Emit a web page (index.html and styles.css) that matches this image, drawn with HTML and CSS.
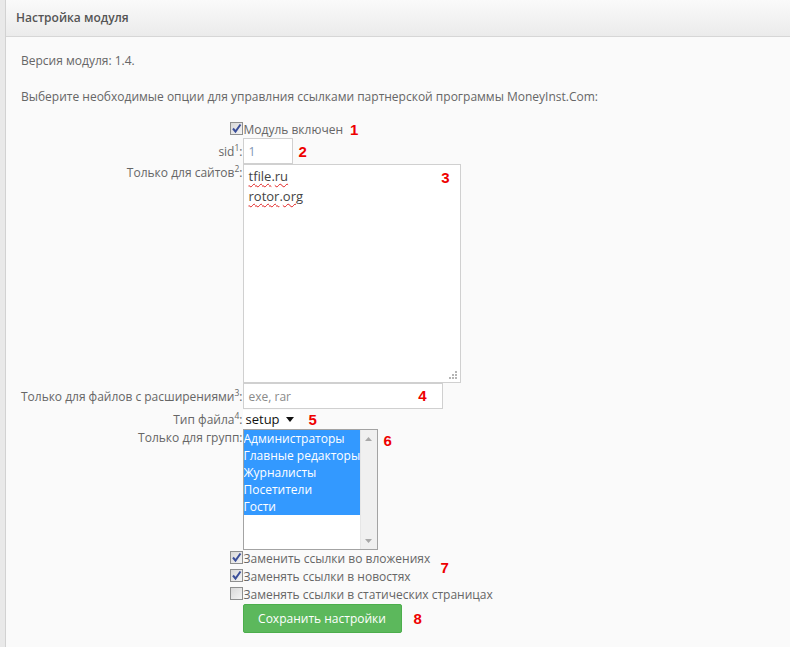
FILE: index.html
```html
<!DOCTYPE html>
<html lang="ru">
<head>
<meta charset="utf-8">
<title>Настройка модуля</title>
<link rel="stylesheet" href="styles.css">
</head>
<body>
<div class="panel">
  <div class="panel-head">Настройка модуля</div>
  <div class="panel-body">
    <p class="line">Версия модуля: 1.4.</p>
    <p class="line intro">Выберите необходимые опции для управлния ссылками партнерской программы MoneyInst.Com:</p>

    <div class="form">
      <div class="lab chk-cell"><span class="cb on"><svg viewBox="0 0 13 13" width="13" height="13"><path d="M3 6.5 L5.5 9.5 L10.5 2.5" fill="none" stroke="#3b4f9a" stroke-width="2"/></svg></span></div>
      <div class="ctl row-chk first">Модуль включен<span class="num n1">1</span></div>

      <div class="lab mid">sid<sup>1</sup>:</div>
      <div class="ctl"><span class="input small"><span class="val blue">1</span></span><span class="num n2">2</span></div>

      <div class="lab">Только для сайтов<sup>2</sup>:</div>
      <div class="ctl">
        <div class="textarea">
          <div class="ta-line"><span class="spell">tfile</span>.<span class="spell">ru</span></div>
          <div class="ta-line"><span class="spell">rotor</span>.<span class="spell">org</span></div>
          <span class="num n3">3</span>
          <svg class="grip" viewBox="0 0 10 10" width="10" height="10"><g fill="#b5b5b5"><rect x="7" y="1" width="2" height="2"/><rect x="4" y="4" width="2" height="2"/><rect x="7" y="4" width="2" height="2"/><rect x="1" y="7" width="2" height="2"/><rect x="4" y="7" width="2" height="2"/><rect x="7" y="7" width="2" height="2"/></g></svg>
        </div>
      </div>

      <div class="lab mid tight">Только для файлов с расширениями<sup>3</sup>:</div>
      <div class="ctl"><span class="input wide"><span class="val gray">exe, rar</span><span class="num n4">4</span></span></div>

      <div class="lab mid">Тип файла<sup>4</sup>:</div>
      <div class="ctl"><span class="select">setup<svg class="caret" viewBox="0 0 8 5" width="8" height="5"><path d="M0 0 H8 L4 5 Z" fill="#111"/></svg></span><span class="num n5">5</span></div>

      <div class="lab">Только для групп:</div>
      <div class="ctl top">
        <div class="listbox">
          <ul class="opts">
            <li>Администраторы</li>
            <li>Главные редакторы</li>
            <li>Журналисты</li>
            <li>Посетители</li>
            <li>Гости</li>
          </ul>
          <div class="sbar">
            <svg viewBox="0 0 7 4" width="7" height="4"><path d="M0 4 L3.5 0 L7 4 Z" fill="#a8a8a8"/></svg>
            <svg viewBox="0 0 7 4" width="7" height="4"><path d="M0 0 L3.5 4 L7 0 Z" fill="#a8a8a8"/></svg>
          </div>
        </div>
        <span class="num n6">6</span>
      </div>

      <div class="lab chk-cell"><span class="cb on"><svg viewBox="0 0 13 13" width="13" height="13"><path d="M3 6.5 L5.5 9.5 L10.5 2.5" fill="none" stroke="#3b4f9a" stroke-width="2"/></svg></span></div>
      <div class="ctl row-chk">Заменить ссылки во вложениях</div>

      <div class="lab chk-cell"><span class="cb on"><svg viewBox="0 0 13 13" width="13" height="13"><path d="M3 6.5 L5.5 9.5 L10.5 2.5" fill="none" stroke="#3b4f9a" stroke-width="2"/></svg></span></div>
      <div class="ctl row-chk">Заменять ссылки в новостях<span class="num n7">7</span></div>

      <div class="lab chk-cell"><span class="cb"></span></div>
      <div class="ctl row-chk">Заменять ссылки в статических страницах</div>

      <div class="lab"></div>
      <div class="ctl btn-row"><span class="btn">Сохранить настройки</span><span class="num n8">8</span></div>
    </div>
  </div>
</div>
</body>
</html>
```

FILE: styles.css
```css
* { box-sizing: border-box; }
html, body { margin: 0; padding: 0; }
body {
  background: #e9e9e9;
  font-family: "Open Sans", "Liberation Sans", sans-serif;
  font-size: 12px;
  color: #666;
  height: 647px;
  overflow: hidden;
}
.panel {
  margin-left: 5px;
  border-left: 1px solid #d2d2d2;
  background: #fafafa;
  min-height: 647px;
}
.panel-head {
  height: 37px;
  padding: 9px 10px 0;
  font-weight: 600;
  font-size: 12px;
  color: #555;
  background: linear-gradient(#fafafa, #ebebeb);
  border-bottom: 1px solid #d6d6d6;
}
.panel-body {
  padding: 15px 15px 0;
}
.line {
  margin: 0;
  line-height: 17px;
}
.intro { margin-top: 19px; }

.form {
  margin-top: 16px;
  display: grid;
  grid-template-columns: max-content 1fr;
  line-height: 17px;
}
.lab {
  text-align: right;
  white-space: nowrap;
}
.lab.mid { align-self: center; }
.lab.tight { letter-spacing: -0.02px; }
.lab sup {
  font-size: 8.5px;
  line-height: 0;
  vertical-align: 5px;
  letter-spacing: 0;
}
.ctl { display: flex; align-items: center; }
.ctl.top { align-items: flex-start; }

.chk-cell { display: flex; justify-content: flex-end; align-items: flex-start; }
.row-chk { position: relative; height: 18px; align-items: center; padding-left: 1px; padding-bottom: 1px; }
.row-chk.first { height: 17px; padding-bottom: 0; }

.cb {
  width: 13px;
  height: 13px;
  border: 1px solid #8e8f8f;
  background: linear-gradient(135deg, #d8d8d8, #f4f4f4);
  display: block;
  position: relative;
  margin-top: 1px;
}
.cb svg { position: absolute; left: -1px; top: -1px; }

.num {
  color: #ee0000;
  font-family: "Liberation Sans", Arial, sans-serif;
  font-weight: bold;
  font-size: 15px;
}
.n1 { margin-left: 7px; }
.n2 { margin-left: 6px; }
.n5 { margin-left: 9px; }
.n6 { margin-left: 6px; margin-top: 3px; }
.n8 { margin-left: 12px; }
.n3 { position: absolute; right: 10px; top: 3px; }
.n4 { position: absolute; right: 15px; top: 3px; }
.n7 { position: absolute; left: 198px; top: -9px; }

.input {
  position: relative;
  display: flex;
  align-items: center;
  height: 26px;
  border: 1px solid #d0d0d0;
  background: #fff;
  padding: 0 5px;
  font-size: 12px;
}
.input.small { width: 50px; }
.input.wide { width: 200px; }
.val.blue { color: #7f95b5; }
.val.gray { color: #8a8a8a; }

.textarea {
  position: relative;
  width: 218px;
  height: 219px;
  border: 1px solid #d0d0d0;
  background: #fff;
  padding: 1px 5px;
  font-size: 13px;
  line-height: 20px;
  color: #444;
}
.spell {
  text-decoration: underline wavy #e02020;
  text-decoration-thickness: 1px;
  text-underline-offset: 2px;
}
.grip { position: absolute; right: 2px; bottom: 2px; }

.select {
  display: flex;
  align-items: center;
  width: 57px;
  height: 19px;
  margin-top: 1px;
  background: #fff;
  padding-left: 3px;
  color: #111;
  font-size: 13px;
}
.caret { margin-left: auto; margin-right: 6px; }

.listbox {
  display: flex;
  width: 135px;
  height: 121px;
  border: 1px solid #a3a3a3;
  background: #fff;
  overflow: hidden;
}
.opts {
  list-style: none;
  margin: 0;
  padding: 0;
  width: 116px;
  flex: none;
  overflow: hidden;
}
.opts li {
  height: 17px;
  line-height: 17px;
  background: #3399ff;
  color: #fff;
  white-space: nowrap;
  font-size: 12px;
}
.sbar {
  flex: 1;
  background: #f0f0f0;
  border-left: 1px solid #e6e6e6;
  display: flex;
  flex-direction: column;
  align-items: center;
  justify-content: space-between;
  padding: 7px 0 6px;
}

.btn-row { padding: 0; }
.btn {
  display: flex;
  align-items: center;
  justify-content: center;
  width: 159px;
  height: 29px;
  background: #5cb85c;
  border: 1px solid #4cae4c;
  border-radius: 2px;
  color: #fff;
  font-size: 12px;
}
```
